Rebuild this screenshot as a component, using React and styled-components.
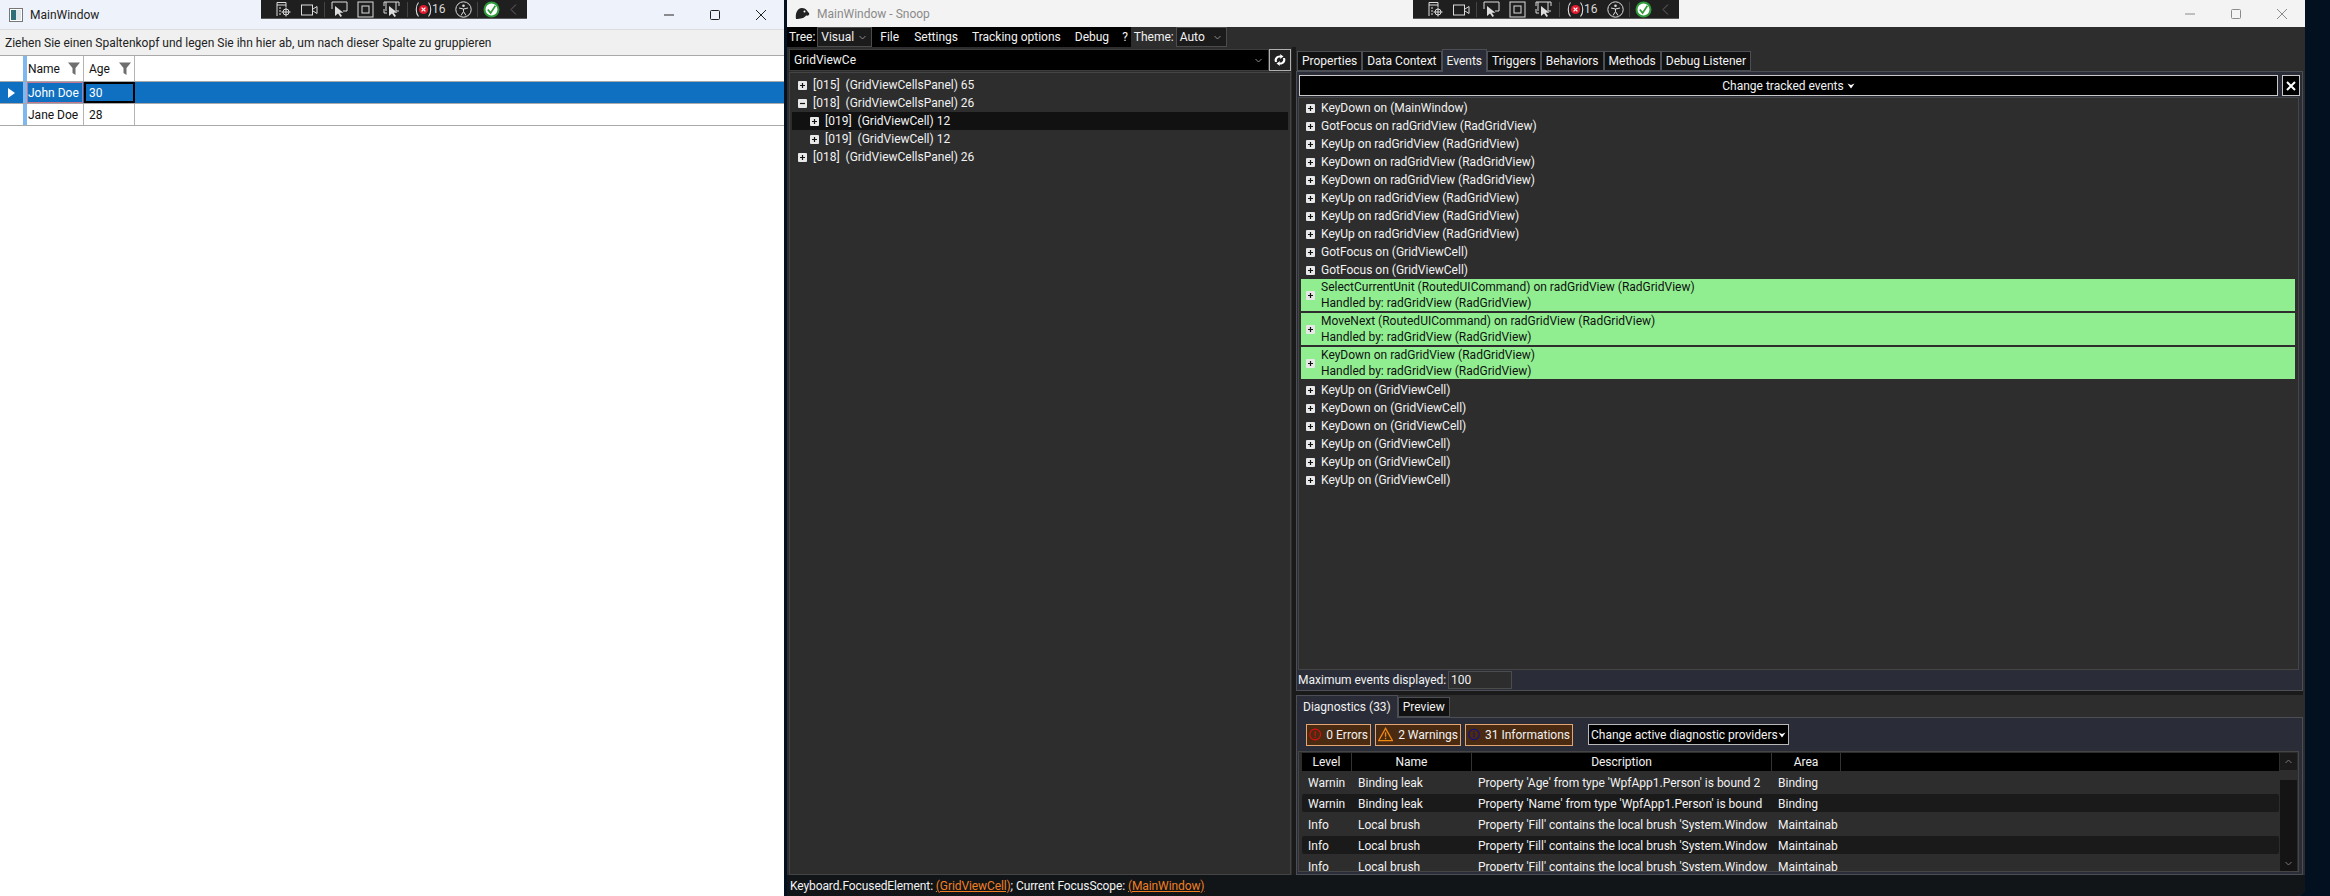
import React from 'react';
import styled, { createGlobalStyle } from 'styled-components';

const GlobalStyle = createGlobalStyle`
  html, body {
    margin: 0;
    padding: 0;
    width: 2330px;
    height: 896px;
    overflow: hidden;
    background: #03101f;
    font-family: Roboto, 'Open Sans', sans-serif;
    font-size: 12px;
  }
  * { box-sizing: border-box; }
`;

const Desktop = styled.div`
  position: relative;
  display: flex;
  width: 2330px;
  height: 896px;
  background: #03101f;
`;

/* ---------- test app window ---------- */

const AppWindow = styled.div`
  width: 784px;
  height: 896px;
  background: #fff;
  color: #111;
  display: flex;
  flex-direction: column;
`;

const AppTitleBar = styled.div`
  height: 29px;
  background: #eef2fb;
  display: flex;
  align-items: center;
  padding: 0 0 0 9px;
  gap: 7px;
  color: #222;
`;

const WindowControls = styled.div`
  margin-left: auto;
  display: flex;
  align-items: center;
  color: ${({ $muted }) => ($muted ? '#8a8a8a' : '#222')};
`;

const ControlButton = styled.div`
  width: 46px;
  height: 27px;
  display: flex;
  align-items: center;
  justify-content: center;
`;

const GroupPanel = styled.div`
  height: 27px;
  background: #f0f0f0;
  border-top: 1px solid #dcdcdc;
  border-bottom: 1px solid #a9a9a9;
  padding-left: 5px;
  display: flex;
  align-items: center;
  color: #222;
  white-space: nowrap;
`;

const GridRow = styled.div`
  display: grid;
  grid-template-columns: 23px 4px 57px 51px 1fr;
  height: ${({ $h }) => $h}px;
  background: ${({ $selected }) => ($selected ? '#0f6fc0' : '#fff')};
  color: ${({ $selected }) => ($selected ? '#fff' : '#111')};
  border-bottom: 1px solid #a9a9a9;
`;

const RowIndicator = styled.div`
  display: flex;
  align-items: center;
  padding-left: 8px;
`;

const Strip = styled.div`
  background: #7fb8ee;
`;

const GridCell = styled.div`
  display: flex;
  align-items: center;
  padding-left: ${({ $wide }) => ($wide ? 5 : 1)}px;
  border-right: 1px solid ${({ $selected }) => ($selected ? 'transparent' : '#b4b4b4')};
  white-space: nowrap;
  outline: ${({ $focus }) => ($focus ? '2px solid #000' : 'none')};
  outline-offset: -2px;
  box-shadow: ${({ $pink }) => ($pink ? 'inset 0 0 0 1px rgba(255, 120, 130, 0.75)' : 'none')};
`;

const HeaderCell = styled(GridCell)`
  justify-content: space-between;
  padding-right: 3px;
`;

/* ---------- floating xaml toolbar ---------- */

const XamlToolbar = styled.div`
  position: absolute;
  top: 0;
  left: ${({ $left }) => $left}px;
  width: 266px;
  height: 19px;
  background: #1f1f1f;
  border-bottom: 1px solid #5a5a5a;
  color: #d8d8d8;
  display: flex;
  align-items: center;
  padding-left: 5px;
  font-size: 12px;
`;

const Grip = styled.div`
  width: 4px;
  height: 14px;
  margin-right: 5px;
  background-image: radial-gradient(#666 0.6px, transparent 0.7px);
  background-size: 2px 2px;
`;

const ToolDivider = styled.div`
  width: 1px;
  height: 15px;
  background: #444;
  margin: 0 ${({ $gap }) => $gap || 6}px;
`;

const ToolIcon = styled.svg`
  width: ${({ $w }) => $w || 17}px;
  height: 17px;
  margin-right: ${({ $mr }) => $mr || 0}px;
  margin-left: ${({ $ml }) => $ml || 0}px;
  flex: none;
`;

/* ---------- snoop window ---------- */

const SnoopWindow = styled.div`
  width: 1518px;
  height: 896px;
  margin-left: 3px;
  background: #2d2d2d;
  border-bottom-right-radius: 8px;
  display: flex;
  flex-direction: column;
  color: #f2f2f2;
  overflow: hidden;
`;

const SnoopTitleBar = styled.div`
  height: 27px;
  background: #f3f3f3;
  color: #8a8a8a;
  display: flex;
  align-items: center;
  padding-left: 8px;
  gap: 7px;
`;

const SnoopBody = styled.div`
  flex: 1;
  display: flex;
  min-height: 0;
`;

const TreeColumn = styled.div`
  width: 505px;
  display: flex;
  flex-direction: column;
`;

const TopBar = styled.div`
  width: 344px;
  height: 20px;
  background: #000;
  display: flex;
  align-items: center;
  padding-left: 2px;
  white-space: nowrap;
`;

const BarLabel = styled.span`
  margin-right: 2px;
`;

const MiniCombo = styled.div`
  width: ${({ $w }) => $w}px;
  height: 20px;
  flex: none;
  background: #1b1b1b;
  border: 1px solid #4c4c4c;
  display: flex;
  align-items: center;
  justify-content: space-between;
  padding: 0 5px 0 3px;
`;

const MenuItem = styled.span`
  margin: 0 ${({ $m }) => $m || 7}px;
`;

const FilterRow = styled.div`
  height: 22px;
  margin: 2px 1px 1px 2px;
  display: flex;
`;

const FilterInput = styled.div`
  flex: 1;
  background: #000;
  border: 1px solid #3c3c3c;
  display: flex;
  align-items: center;
  justify-content: space-between;
  padding: 0 6px 0 4px;
`;

const RefreshButton = styled.div`
  width: 22px;
  background: #222;
  border: 1px solid #b0b0b0;
  display: flex;
  align-items: center;
  justify-content: center;
`;

const TreePanel = styled.div`
  flex: 1;
  margin: 0 1px 0 2px;
  border: 1px solid #444;
  padding: 3px 2px;
`;

const TreeRow = styled.div`
  height: 18px;
  display: flex;
  align-items: center;
  padding-left: ${({ $level }) => 6 + $level * 12}px;
  gap: 6px;
  white-space: pre;
  background: ${({ $selected }) => ($selected ? '#111' : 'transparent')};
`;

const Splitter = styled.div`
  width: 4px;
  margin-top: 20px;
  background: #1a1a1a;
`;

const DetailColumn = styled.div`
  flex: 1;
  min-width: 0;
  display: flex;
  flex-direction: column;
  padding: 22px 2px 0 0;
`;

const TabStrip = styled.div`
  height: 22px;
  display: flex;
  align-items: flex-end;
  padding-left: ${({ $flush }) => ($flush ? 0 : 1)}px;
  flex: none;
`;

const Tab = styled.div`
  height: ${({ $active }) => ($active ? 23 : 20)}px;
  margin-bottom: ${({ $active }) => ($active ? -1 : 0)}px;
  padding: 0 ${({ $pad }) => $pad || 4}px;
  background: ${({ $active }) => ($active ? '#2a2d37' : '#111')};
  border: 1px solid #4c4e56;
  border-bottom: ${({ $active }) => ($active ? 'none' : '1px solid #4c4e56')};
  display: flex;
  align-items: center;
  position: relative;
  z-index: ${({ $active }) => ($active ? 1 : 0)};
  white-space: nowrap;
`;

const TabPanel = styled.div`
  height: ${({ $h }) => $h}px;
  background: #2a2d37;
  border: 1px solid #4c4e56;
  display: flex;
  flex-direction: column;
  flex: none;
`;

const TrackRow = styled.div`
  height: 21px;
  margin: 3px 2px 0 2px;
  display: flex;
  gap: 4px;
`;

const TrackButton = styled.div`
  flex: 1;
  background: #000;
  border: 1px solid #c8c8c8;
  display: flex;
  align-items: center;
  justify-content: center;
  gap: 3px;
`;

const CloseButton = styled.div`
  width: 18px;
  background: #000;
  border: 1px solid #c8c8c8;
  display: flex;
  align-items: center;
  justify-content: center;
`;

const EventList = styled.div`
  height: 573px;
  margin: 1px 3px 0 1px;
  background: #2d2d2d;
  border: 1px solid #454545;
  padding: 1px 0 0 2px;
  display: flex;
  flex-direction: column;
`;

const EventRow = styled.div`
  height: 18px;
  flex: none;
  display: flex;
  align-items: center;
  padding-left: 5px;
  gap: 6px;
  white-space: nowrap;
`;

const HandledRow = styled.div`
  height: 32px;
  flex: none;
  margin: 0 3px 2px 0;
  background: #90ee90;
  color: #111;
  display: flex;
  align-items: center;
  padding-left: 5px;
  gap: 6px;
  white-space: nowrap;
  line-height: 16px;
`;

const MaxRow = styled.div`
  height: 21px;
  display: flex;
  align-items: center;
  padding-left: 1px;
  margin-top: -1px;
`;

const MaxLabel = styled.span`
  width: 150px;
`;

const MaxInput = styled.div`
  width: 64px;
  height: 18px;
  background: #2d2d2d;
  border: 1px solid #4c4c4c;
  padding-left: 2px;
  display: flex;
  align-items: center;
`;

const HSplit = styled.div`
  height: 4px;
  flex: none;
  background: #1a1a1a;
`;

const DiagToolbar = styled.div`
  height: 33px;
  display: flex;
  align-items: center;
  padding: 0 0 0 9px;
  gap: 4px;
  flex: none;
`;

const DiagChip = styled.div`
  width: ${({ $w }) => $w}px;
  height: 22px;
  background: #4a2a10;
  border: 1px solid #e3a672;
  display: flex;
  align-items: center;
  gap: 5px;
  padding: 0 2px;
  white-space: nowrap;
`;

const ProviderCombo = styled.div`
  width: 201px;
  height: 21px;
  margin-left: 11px;
  background: #000;
  border: 1px solid #b8b8b8;
  display: flex;
  align-items: center;
  justify-content: space-between;
  padding: 0 4px 0 2px;
  white-space: nowrap;
`;

const DiagGrid = styled.div`
  flex: 1;
  min-height: 0;
  margin: 0 3px 2px 1px;
  border: 1px solid #454545;
  background: #2d2d2d;
  display: flex;
  overflow: hidden;
`;

const DiagTable = styled.div`
  flex: 1;
  min-width: 0;
  overflow: hidden;
  padding: 0 1px 0 3px;
`;

const DiagHeader = styled.div`
  height: 18px;
  margin-top: 1px;
  background: #000;
  display: grid;
  grid-template-columns: 50px 120px 300px 69px 1fr;
`;

const DiagHead = styled.div`
  display: flex;
  align-items: center;
  justify-content: center;
  border-right: 1px solid #333;
`;

const DiagRow = styled.div`
  height: 18px;
  margin-top: 3px;
  display: grid;
  grid-template-columns: 50px 120px 300px 69px 1fr;
  background: ${({ $alt }) => ($alt ? '#1a1a1a' : 'transparent')};
  border-radius: 2px;
  align-items: center;
  &:nth-child(2) { margin-top: 2px; }
`;

const DiagCell = styled.div`
  padding: 1px 0 0 6px;
  overflow: hidden;
  white-space: nowrap;
`;

const DiagScroll = styled.div`
  width: 17px;
  flex: none;
  margin: 1px 1px 0 0;
  display: flex;
  flex-direction: column;
`;

const ScrollCap = styled.div`
  height: 17px;
  background: #1a1a1a;
  display: flex;
  align-items: center;
  justify-content: center;
  flex: none;
`;

const ScrollThumb = styled.div`
  height: 10px;
  background: #2d2d2d;
  flex: none;
`;

const ScrollTrack = styled.div`
  flex: 1;
  background: #141414;
  display: flex;
  flex-direction: column;
  justify-content: flex-end;
  align-items: center;
  padding-bottom: 5px;
`;

const StatusBar = styled.div`
  height: 21px;
  background: #111518;
  display: flex;
  align-items: center;
  padding-left: 3px;
  white-space: pre;
  letter-spacing: -0.1px;
  flex: none;
`;

const FocusLink = styled.span`
  color: #ef7f22;
  text-decoration: underline;
`;

const Chevron = ({ color = '#8c8c8c' }) => (
  <svg width="7" height="5" viewBox="0 0 7 5" style={{ flex: 'none' }}>
    <path d="M0.5 1 L3.5 4 L6.5 1" fill="none" stroke={color} strokeWidth="1" />
  </svg>
);

const Expander = ({ open }) => (
  <svg width="9" height="9" viewBox="0 0 9 9" style={{ flex: 'none' }}>
    <rect x="0" y="0" width="9" height="9" rx="1" fill="#e8e8e8" />
    <path d={open ? 'M2 4.5H7' : 'M2 4.5H7M4.5 2V7'} stroke="#111" strokeWidth="1.2" />
  </svg>
);

const DownTriangle = () => (
  <svg width="8" height="6" viewBox="0 0 8 6" style={{ flex: 'none' }}>
    <path d="M0.5 0.5 L4 2 L7.5 0.5 L4 5.5Z" fill="#fff" />
  </svg>
);

const FunnelIcon = () => (
  <svg width="12" height="13" viewBox="0 0 12 13" style={{ flex: 'none' }}>
    <path d="M0 0.5H12L7.5 6V13L4.5 11V6Z" fill="#6e6e6e" />
  </svg>
);

const XamlBar = ({ left }) => (
  <XamlToolbar $left={left}>
    <Grip />
    <ToolIcon viewBox="0 0 17 17" $mr={9}>
      <path d="M2 15V1.5H11V6M2 4H11M4 7H6M4 10H6M4 13H6" fill="none" stroke="#ddd" />
      <circle cx="11" cy="11" r="3" fill="none" stroke="#ddd" />
      <path d="M11 6.5V15.5M6.5 11H15.5" stroke="#ddd" />
    </ToolIcon>
    <ToolIcon viewBox="0 0 17 17">
      <rect x="0.5" y="4" width="11" height="10" fill="none" stroke="#ddd" />
      <path d="M12 8L16 5.5V12.5L12 10" fill="none" stroke="#ddd" />
    </ToolIcon>
    <ToolDivider />
    <ToolIcon viewBox="0 0 17 17" $mr={9}>
      <path d="M1 8V1H16V10H12" fill="none" stroke="#ddd" />
      <path d="M4 5V15L7 12.5L9.5 16L11 15L8.8 11.7H12.5Z" fill="#ddd" />
    </ToolIcon>
    <ToolIcon viewBox="0 0 17 17" $mr={9}>
      <rect x="1" y="1" width="15" height="15" fill="none" stroke="#ddd" />
      <rect x="5" y="5" width="7" height="7" fill="none" stroke="#ddd" />
    </ToolIcon>
    <ToolIcon viewBox="0 0 17 17">
      <path d="M1 5V1H16V5M13 1V10H16M1 8V12H4M3 1V10" fill="none" stroke="#ddd" />
      <path d="M6 5V15L9 12.5L11.5 16L13 15L10.8 11.7H14.5Z" fill="#ddd" />
    </ToolIcon>
    <ToolDivider $gap={7} />
    <ToolIcon viewBox="0 0 17 17">
      <circle cx="8.5" cy="8.5" r="4.6" fill="#e21b2c" />
      <path d="M6.6 6.6L10.4 10.4M10.4 6.6L6.6 10.4" stroke="#fff" strokeWidth="1.2" />
      <path d="M3.5 1.5C0.5 5 0.5 12 3.5 15.5M13.5 1.5C16.5 5 16.5 12 13.5 15.5" fill="none" stroke="#ddd" strokeWidth="1.1" />
    </ToolIcon>
    <span>16</span>
    <ToolIcon viewBox="0 0 17 17" $ml={9}>
      <circle cx="8.5" cy="8.5" r="7.7" fill="none" stroke="#ddd" />
      <circle cx="8.5" cy="4.8" r="1.3" fill="#ddd" />
      <path d="M4 7L8.5 8L13 7M8.5 8V10.5L6 14.5M8.5 10.5L11 14.5" fill="none" stroke="#ddd" />
    </ToolIcon>
    <ToolDivider $gap={5} />
    <ToolIcon viewBox="0 0 17 17">
      <circle cx="8.5" cy="8.5" r="7" fill="#fff" stroke="#2f9b3a" strokeWidth="2" />
      <path d="M4.8 8.5L7.6 12L12.4 4.8" fill="none" stroke="#2f9b3a" strokeWidth="1.7" />
    </ToolIcon>
    <ToolIcon viewBox="0 0 7 11" $w={7} $ml={10}>
      <path d="M6 0.5L1 5.5L6 10.5" fill="none" stroke="#666" />
    </ToolIcon>
  </XamlToolbar>
);

const MinIcon = () => (
  <svg width="10" height="10" viewBox="0 0 10 10"><path d="M0 5H10" stroke="currentColor" /></svg>
);
const MaxIcon = () => (
  <svg width="10" height="10" viewBox="0 0 10 10"><rect x="0.5" y="0.5" width="9" height="9" rx="1" fill="none" stroke="currentColor" /></svg>
);
const CloseIcon = () => (
  <svg width="10" height="10" viewBox="0 0 10 10"><path d="M0 0L10 10M10 0L0 10" stroke="currentColor" /></svg>
);

const eventsTop = [
  'KeyDown on (MainWindow)',
  'GotFocus on radGridView (RadGridView)',
  'KeyUp on radGridView (RadGridView)',
  'KeyDown on radGridView (RadGridView)',
  'KeyDown on radGridView (RadGridView)',
  'KeyUp on radGridView (RadGridView)',
  'KeyUp on radGridView (RadGridView)',
  'KeyUp on radGridView (RadGridView)',
  'GotFocus on (GridViewCell)',
  'GotFocus on (GridViewCell)',
];

const handled = [
  'SelectCurrentUnit (RoutedUICommand) on radGridView (RadGridView)',
  'MoveNext (RoutedUICommand) on radGridView (RadGridView)',
  'KeyDown on radGridView (RadGridView)',
];

const eventsBottom = [
  'KeyUp on (GridViewCell)',
  'KeyDown on (GridViewCell)',
  'KeyDown on (GridViewCell)',
  'KeyUp on (GridViewCell)',
  'KeyUp on (GridViewCell)',
  'KeyUp on (GridViewCell)',
];

const diagnostics = [
  ['Warnin', 'Binding leak', "Property 'Age' from type 'WpfApp1.Person' is bound 2", 'Binding'],
  ['Warnin', 'Binding leak', "Property 'Name' from type 'WpfApp1.Person' is bound", 'Binding'],
  ['Info', 'Local brush', "Property 'Fill' contains the local brush 'System.Window", 'Maintainab'],
  ['Info', 'Local brush', "Property 'Fill' contains the local brush 'System.Window", 'Maintainab'],
  ['Info', 'Local brush', "Property 'Fill' contains the local brush 'System.Window", 'Maintainab'],
];

const tabs = [
  ['Properties'],
  ['Data Context'],
  ['Events', true],
  ['Triggers'],
  ['Behaviors'],
  ['Methods'],
  ['Debug Listener'],
];

const App = () => (
  <Desktop>
    <GlobalStyle />
    <AppWindow>
      <AppTitleBar>
        <svg width="14" height="14" viewBox="0 0 14 14">
          <rect x="0.5" y="0.5" width="13" height="13" fill="#fff" stroke="#777" />
          <rect x="2" y="2" width="5" height="10" fill="#2e6e78" />
          <rect x="7" y="2" width="5" height="10" fill="#dfe6ea" />
        </svg>
        <span>MainWindow</span>
        <WindowControls>
          <ControlButton><MinIcon /></ControlButton>
          <ControlButton><MaxIcon /></ControlButton>
          <ControlButton><CloseIcon /></ControlButton>
        </WindowControls>
      </AppTitleBar>
      <GroupPanel>Ziehen Sie einen Spaltenkopf und legen Sie ihn hier ab, um nach dieser Spalte zu gruppieren</GroupPanel>
      <GridRow $h={26}>
        <div />
        <Strip />
        <HeaderCell>Name <FunnelIcon /></HeaderCell>
        <HeaderCell $wide>Age <FunnelIcon /></HeaderCell>
      </GridRow>
      <GridRow $h={22} $selected>
        <RowIndicator>
          <svg width="7" height="10" viewBox="0 0 7 10"><path d="M0 0L7 5L0 10Z" fill="#fff" /></svg>
        </RowIndicator>
        <Strip />
        <GridCell $selected $pink>John Doe</GridCell>
        <GridCell $selected $focus $wide>30</GridCell>
      </GridRow>
      <GridRow $h={22}>
        <div />
        <Strip />
        <GridCell>Jane Doe</GridCell>
        <GridCell $wide>28</GridCell>
      </GridRow>
    </AppWindow>

    <SnoopWindow>
      <SnoopTitleBar>
        <svg width="15" height="13" viewBox="0 0 15 13">
          <path d="M1 12C0 7 2 1 7 1C11 1 12 4 14 6C15 8 13 9 11 8.5C10 11 5 12 1 12Z" fill="#222" />
          <circle cx="9.5" cy="4.5" r="1" fill="#fff" />
        </svg>
        <span>MainWindow - Snoop</span>
        <WindowControls $muted>
          <ControlButton><MinIcon /></ControlButton>
          <ControlButton><MaxIcon /></ControlButton>
          <ControlButton><CloseIcon /></ControlButton>
        </WindowControls>
      </SnoopTitleBar>
      <SnoopBody>
        <TreeColumn>
          <TopBar>
            <BarLabel>Tree:</BarLabel>
            <MiniCombo $w={55}>Visual <Chevron /></MiniCombo>
            <MenuItem $m={8}>File</MenuItem>
            <MenuItem>Settings</MenuItem>
            <MenuItem>Tracking options</MenuItem>
            <MenuItem>Debug</MenuItem>
            <MenuItem $m={6}>?</MenuItem>
            <BarLabel>Theme:</BarLabel>
            <MiniCombo $w={51}>Auto <Chevron /></MiniCombo>
          </TopBar>
          <FilterRow>
            <FilterInput>GridViewCe <Chevron /></FilterInput>
            <RefreshButton>
              <svg width="14" height="12" viewBox="0 0 14 12">
                <path d="M2 8C0.5 4 4 1 7.5 1.5L7 0L10.5 2.5L7 5L7.5 3.5C5 3 3.2 5 4 8Z" fill="#fff" />
                <path d="M12 4C13.5 8 10 11 6.5 10.5L7 12L3.5 9.5L7 7L6.5 8.5C9 9 10.8 7 10 4Z" fill="#fff" />
              </svg>
            </RefreshButton>
          </FilterRow>
          <TreePanel>
            <TreeRow $level={0}><Expander /><span>[015]  (GridViewCellsPanel) 65</span></TreeRow>
            <TreeRow $level={0}><Expander open /><span>[018]  (GridViewCellsPanel) 26</span></TreeRow>
            <TreeRow $level={1} $selected><Expander /><span>[019]  (GridViewCell) 12</span></TreeRow>
            <TreeRow $level={1}><Expander /><span>[019]  (GridViewCell) 12</span></TreeRow>
            <TreeRow $level={0}><Expander /><span>[018]  (GridViewCellsPanel) 26</span></TreeRow>
          </TreePanel>
        </TreeColumn>
        <Splitter />
        <DetailColumn>
          <TabStrip>
            {tabs.map(([label, active]) => (
              <Tab key={label} $active={active}>{label}</Tab>
            ))}
          </TabStrip>
          <TabPanel $h={620}>
            <TrackRow>
              <TrackButton>Change tracked events <DownTriangle /></TrackButton>
              <CloseButton>
                <svg width="10" height="10" viewBox="0 0 10 10">
                  <path d="M1 1L9 9M9 1L1 9" stroke="#fff" strokeWidth="2" />
                </svg>
              </CloseButton>
            </TrackRow>
            <EventList>
              {eventsTop.map((text, i) => (
                <EventRow key={i}><Expander />{text}</EventRow>
              ))}
              {handled.map((text, i) => (
                <HandledRow key={i}>
                  <Expander />
                  <div>
                    {text}
                    <br />
                    Handled by: radGridView (RadGridView)
                  </div>
                </HandledRow>
              ))}
              {eventsBottom.map((text, i) => (
                <EventRow key={i}><Expander />{text}</EventRow>
              ))}
            </EventList>
            <MaxRow>
              <MaxLabel>Maximum events displayed:</MaxLabel>
              <MaxInput>100</MaxInput>
            </MaxRow>
          </TabPanel>
          <HSplit />
          <TabStrip $flush>
            <Tab $active $pad={6}>Diagnostics (33)</Tab>
            <Tab>Preview</Tab>
          </TabStrip>
          <TabPanel $h={158}>
            <DiagToolbar>
              <DiagChip $w={65}>
                <svg width="15" height="15" viewBox="0 0 15 15">
                  <circle cx="7.5" cy="7.5" r="6.5" fill="none" stroke="#e01010" strokeWidth="1.3" />
                  <path d="M7.5 3.5V9M7.5 10.3V11.8" stroke="#e01010" strokeWidth="1.4" />
                </svg>
                0 Errors
              </DiagChip>
              <DiagChip $w={86}>
                <svg width="16" height="15" viewBox="0 0 16 15">
                  <path d="M8 1L15.3 14H0.7Z" fill="none" stroke="#f08a10" strokeWidth="1.3" />
                  <path d="M8 5V10M8 11V12.6" stroke="#f08a10" strokeWidth="1.4" />
                </svg>
                2 Warnings
              </DiagChip>
              <DiagChip $w={108}>
                <svg width="15" height="15" viewBox="0 0 15 15">
                  <circle cx="7.5" cy="7.5" r="6.5" fill="none" stroke="#10108a" strokeWidth="1.3" />
                  <path d="M7.5 6V11.5M7.5 3.2V4.7" stroke="#10108a" strokeWidth="1.4" />
                </svg>
                31 Informations
              </DiagChip>
              <ProviderCombo>Change active diagnostic providers <DownTriangle /></ProviderCombo>
            </DiagToolbar>
            <DiagGrid>
              <DiagTable>
                <DiagHeader>
                  <DiagHead>Level</DiagHead>
                  <DiagHead>Name</DiagHead>
                  <DiagHead>Description</DiagHead>
                  <DiagHead>Area</DiagHead>
                  <div />
                </DiagHeader>
                {diagnostics.map((d, i) => (
                  <DiagRow key={i} $alt={i % 2 === 1}>
                    <DiagCell>{d[0]}</DiagCell>
                    <DiagCell>{d[1]}</DiagCell>
                    <DiagCell>{d[2]}</DiagCell>
                    <DiagCell>{d[3]}</DiagCell>
                  </DiagRow>
                ))}
              </DiagTable>
              <DiagScroll>
                <ScrollCap>
                  <svg width="7" height="5" viewBox="0 0 7 5"><path d="M0.5 4L3.5 1L6.5 4" fill="none" stroke="#777" /></svg>
                </ScrollCap>
                <ScrollThumb />
                <ScrollTrack><Chevron color="#777" /></ScrollTrack>
              </DiagScroll>
            </DiagGrid>
          </TabPanel>
        </DetailColumn>
      </SnoopBody>
      <StatusBar>
        Keyboard.FocusedElement: <FocusLink>(GridViewCell)</FocusLink>; Current FocusScope: <FocusLink>(MainWindow)</FocusLink>
      </StatusBar>
    </SnoopWindow>

    <XamlBar left={261} />
    <XamlBar left={1413} />
  </Desktop>
);

export default App;
